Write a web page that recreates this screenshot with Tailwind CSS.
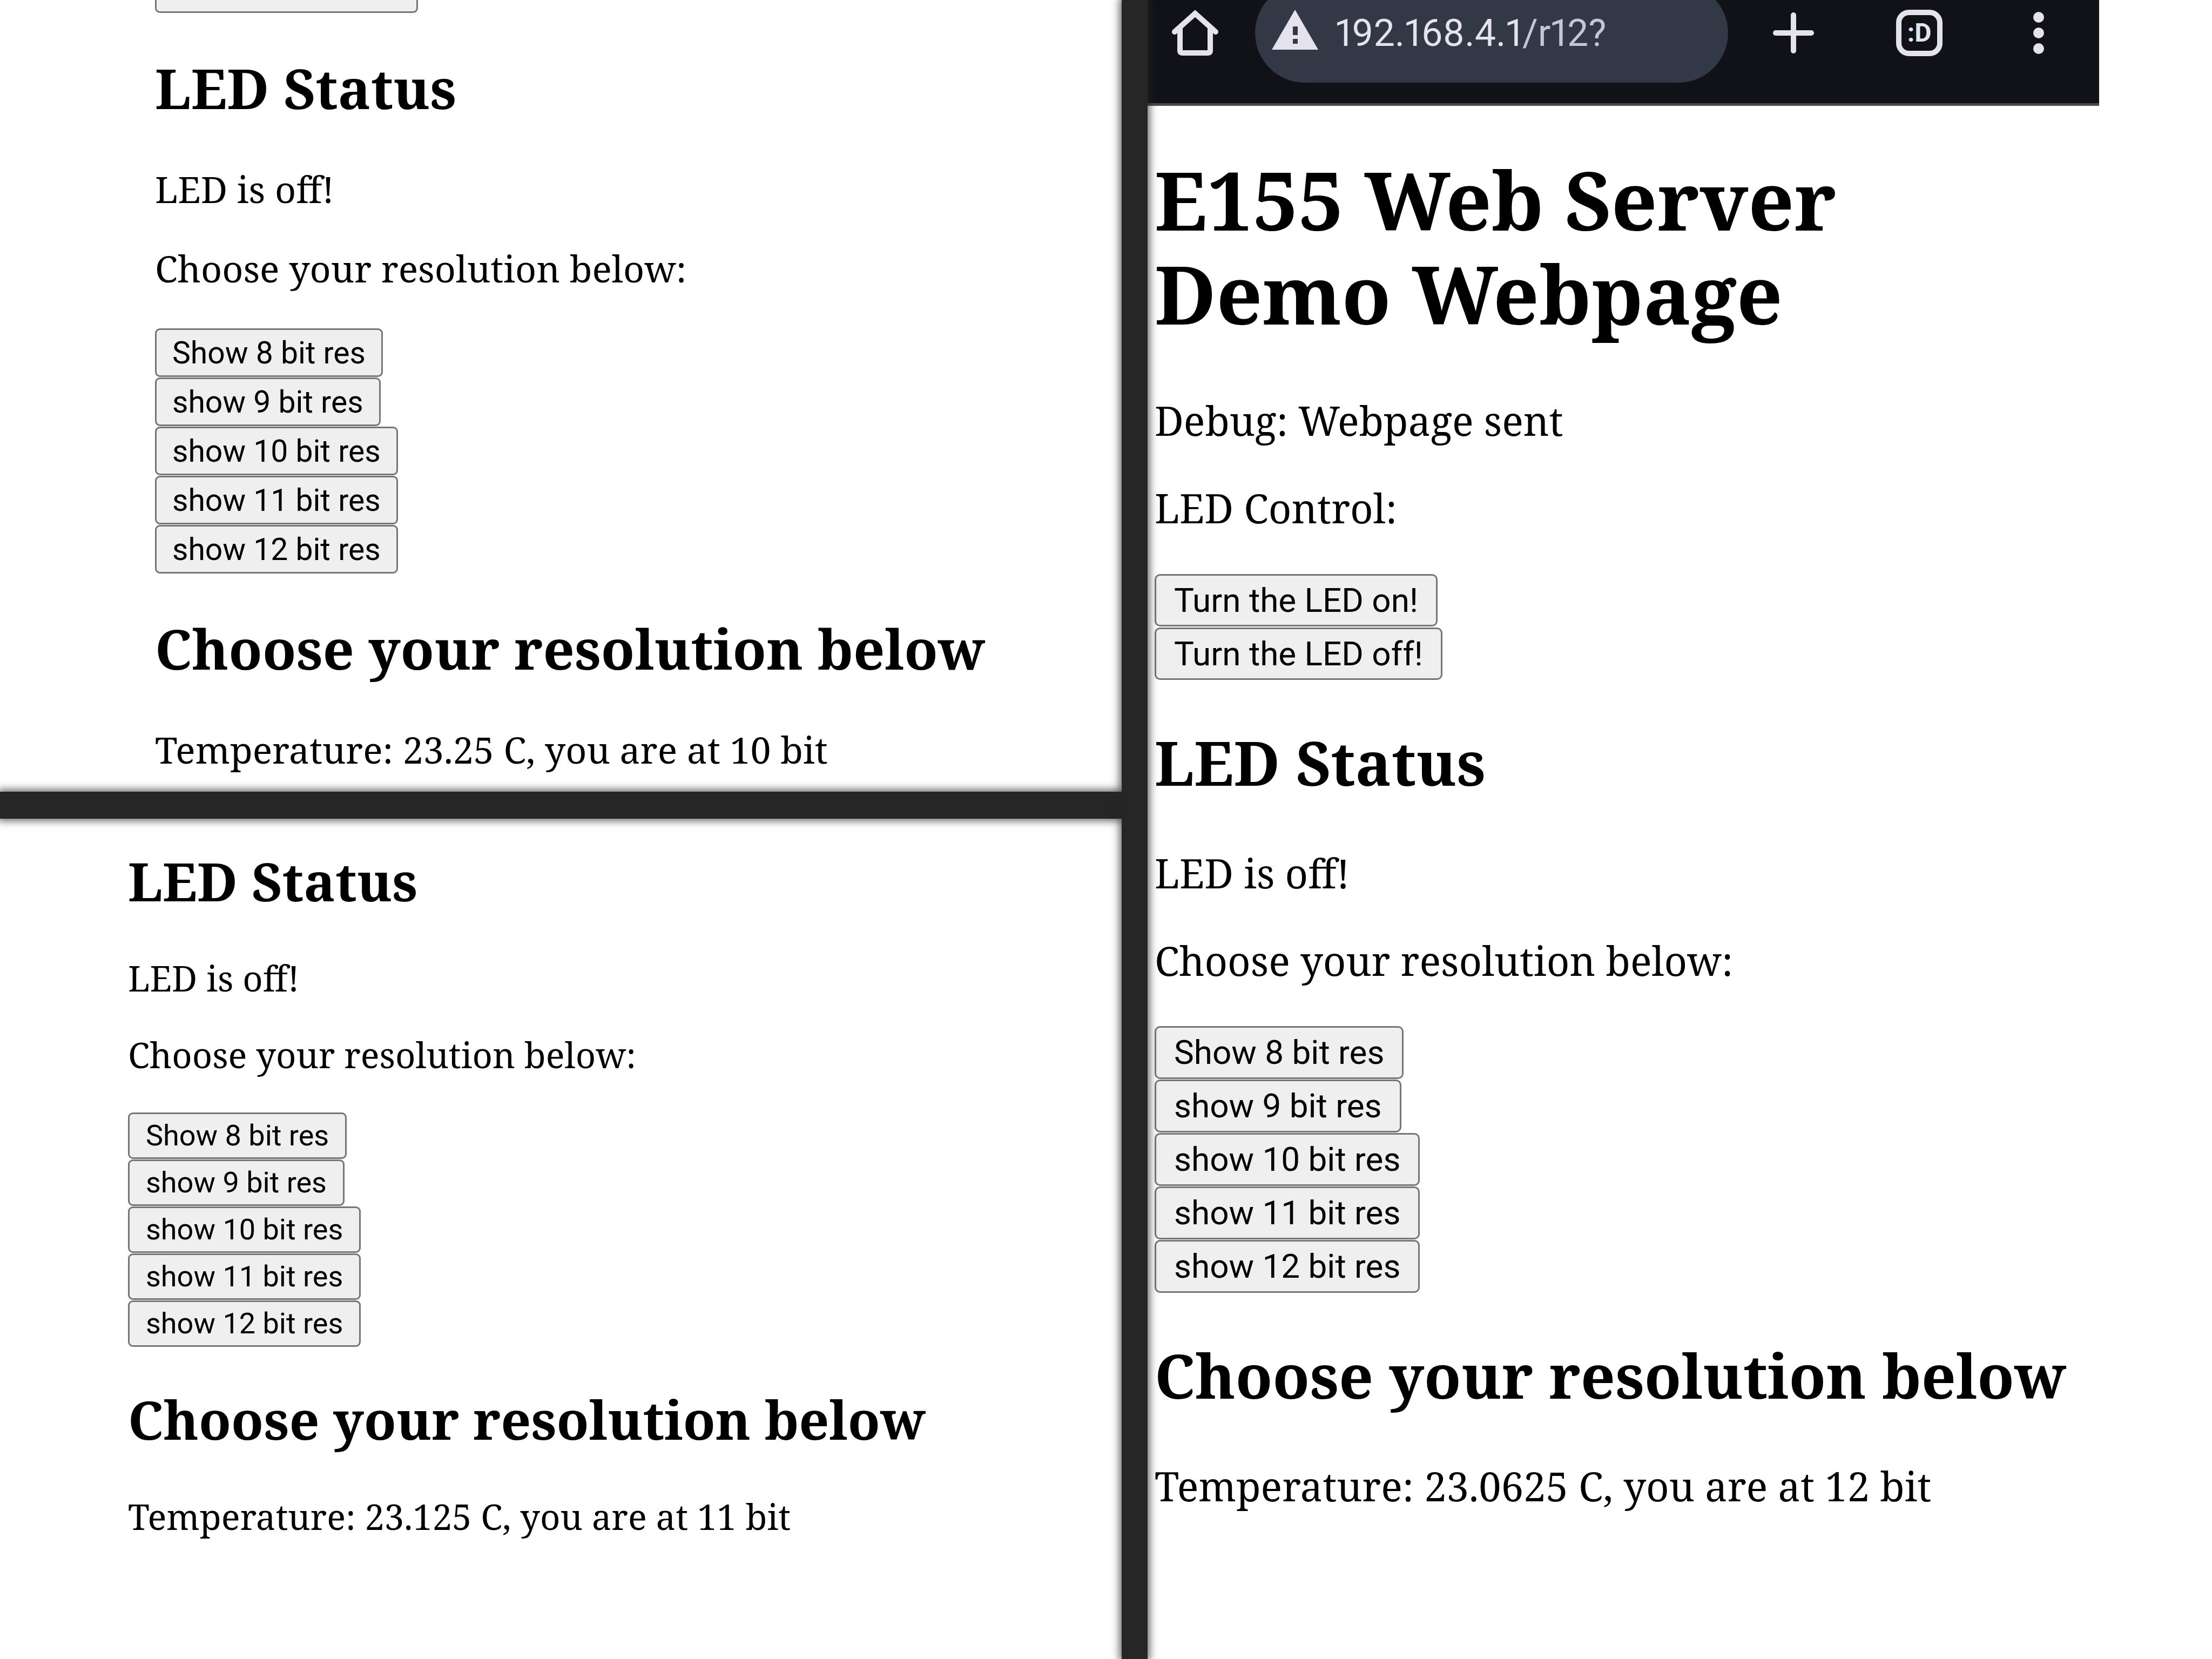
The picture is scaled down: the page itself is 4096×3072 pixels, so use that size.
<!DOCTYPE html>
<html lang="en">
<head>
<meta charset="utf-8">
<meta name="viewport" content="width=device-width, initial-scale=1">
<title>E155 Web Server Demo Webpage</title>
<script src="https://cdn.jsdelivr.net/npm/@tailwindcss/browser@4"></script>
</head>
<body class="bg-white text-black font-['Noto_Serif','DejaVu_Serif_Condensed',serif]">
<div class="grid min-h-screen grid-cols-[2077fr_48px_1971fr] overflow-hidden">

  <div class="flex min-w-0 flex-col">
    <!-- 10 bit reading -->
    <section class="pl-[287px] pb-[38px]">
      <!-- lower edge of the button that is scrolled out of view -->
      <button class="block h-[24px] w-[487px] rounded-b-[9px] border-3 border-t-0 border-[#767676] bg-[#efefef]" aria-label="Turn the LED off!"></button>
      <h2 class="mt-[79px] text-[102px] leading-[120px] font-bold">LED Status</h2>
      <p class="mt-[87px] text-[68px] leading-[80px]">LED is off!</p>
      <p class="mt-[67px] text-[68px] leading-[80px]">Choose your resolution below:</p>
      <div class="mt-[71px] flex flex-col items-start gap-px font-[Roboto,sans-serif] text-[57px] leading-none">
        <button class="h-[90px] rounded-[9px] border-3 border-[#767676] bg-[#efefef] px-[29px]">Show 8 bit res</button>
        <button class="h-[90px] rounded-[9px] border-3 border-[#767676] bg-[#efefef] px-[29px]">show 9 bit res</button>
        <button class="h-[90px] rounded-[9px] border-3 border-[#767676] bg-[#efefef] px-[29px]">show 10 bit res</button>
        <button class="h-[90px] rounded-[9px] border-3 border-[#767676] bg-[#efefef] px-[29px]">show 11 bit res</button>
        <button class="h-[90px] rounded-[9px] border-3 border-[#767676] bg-[#efefef] px-[29px]">show 12 bit res</button>
      </div>
      <h2 class="mt-[79px] text-[102px] leading-[120px] font-bold">Choose your resolution below</h2>
      <p class="mt-[87px] text-[68px] leading-[80px]">Temperature: 23.25 C, you are at 10 bit</p>
    </section>

    <div class="h-[50px] shrink-0 bg-[#262626] shadow-[0_0_14px_4px_#262626b3]"></div>

    <!-- 11 bit reading -->
    <section class="pl-[237px] pt-[58px]">
      <h2 class="text-[98px] leading-[115px] font-bold">LED Status</h2>
      <p class="mt-[84px] text-[65px] leading-[77px]">LED is off!</p>
      <p class="mt-[65px] text-[65px] leading-[77px]">Choose your resolution below:</p>
      <div class="mt-[68px] flex flex-col items-start gap-px font-[Roboto,sans-serif] text-[54px] leading-none">
        <button class="h-[86px] rounded-[9px] border-3 border-[#767676] bg-[#efefef] px-[30px]">Show 8 bit res</button>
        <button class="h-[86px] rounded-[9px] border-3 border-[#767676] bg-[#efefef] px-[30px]">show 9 bit res</button>
        <button class="h-[86px] rounded-[9px] border-3 border-[#767676] bg-[#efefef] px-[30px]">show 10 bit res</button>
        <button class="h-[86px] rounded-[9px] border-3 border-[#767676] bg-[#efefef] px-[30px]">show 11 bit res</button>
        <button class="h-[86px] rounded-[9px] border-3 border-[#767676] bg-[#efefef] px-[30px]">show 12 bit res</button>
      </div>
      <h2 class="mt-[77px] text-[98px] leading-[115px] font-bold">Choose your resolution below</h2>
      <p class="mt-[84px] text-[65px] leading-[77px]">Temperature: 23.125 C, you are at 11 bit</p>
    </section>
  </div>

  <div class="z-10 bg-[#262626] shadow-[0_0_14px_4px_#262626b3]"></div>

  <!-- 12 bit reading, with the browser bar -->
  <div class="min-w-0">
    <header class="mr-[209px] h-[196px] overflow-hidden border-b-5 border-[#49494d] bg-[#111217] text-[#e4e2ea]">
      <nav class="-mt-[31px] flex h-[184px] items-center pr-[102px] pl-[45px]">
        <button aria-label="Home" class="shrink-0">
          <svg class="size-[86px]" viewBox="0 0 86 86" fill="none" stroke="currentColor" stroke-width="10" stroke-linecap="round" stroke-linejoin="round"><path d="M5 41 43 7l38 34" stroke-linejoin="miter"/><path d="M15 34v42q0 4 4 4h48q4 0 4-4V34"/></svg>
        </button>
        <div class="ml-[68px] flex h-full min-w-0 flex-1 items-center rounded-full bg-[#333846] pr-[60px] pl-[31px]">
          <button aria-label="Connection is not secure" class="shrink-0">
            <svg class="h-[86px] w-[86px]" viewBox="0 0 86 86" fill="currentColor"><path fill-rule="evenodd" d="M43 0 86 74H0ZM39 31v16h9V31ZM39 54v9h9v-9Z"/></svg>
          </button>
          <input aria-label="Address" type="text" value="192.168.4.1/r12?" class="ml-[32px] h-[100px] min-w-0 flex-1 bg-[linear-gradient(90deg,#e4e3ec_342px,#c3c5d8_342px)] bg-clip-text font-[Roboto,sans-serif] text-[70px] text-transparent proportional-nums outline-none">
        </div>
        <button aria-label="New tab" class="ml-[83px] shrink-0">
          <svg class="size-[76px]" viewBox="0 0 76 76" fill="none" stroke="currentColor" stroke-width="10" stroke-linecap="round"><path d="M38 5v66M5 38h66"/></svg>
        </button>
        <button aria-label="Switch tabs" class="ml-[152px] flex size-[86px] shrink-0 items-center justify-center rounded-[24px] border-10 border-current font-[Roboto,sans-serif] text-[48px] leading-none font-bold">:D</button>
        <button aria-label="More options" class="ml-[168px] shrink-0">
          <svg class="h-[78px] w-[20px]" viewBox="0 0 20 78" fill="currentColor"><circle cx="10" cy="10" r="10"/><circle cx="10" cy="39" r="10"/><circle cx="10" cy="68" r="10"/></svg>
        </button>
      </nav>
    </header>
    <main class="pt-[87px] pl-[13px]">
      <h1 class="text-[149px] leading-[174px] font-bold">E155 Web Server<br>Demo Webpage</h1>
      <p class="mt-[104px] text-[74px] leading-[88px]">Debug: Webpage sent</p>
      <p class="mt-[74px] text-[74px] leading-[88px]">LED Control:</p>
      <div class="mt-[78px] flex flex-col items-start gap-[2px] font-[Roboto,sans-serif] text-[62px] leading-none">
        <button class="h-[97px] rounded-[10px] border-3 border-[#767676] bg-[#efefef] px-[33px]">Turn the LED on!</button>
        <button class="h-[97px] rounded-[10px] border-3 border-[#767676] bg-[#efefef] px-[33px]">Turn the LED off!</button>
      </div>
      <h2 class="mt-[87px] text-[112px] leading-[132px] font-bold">LED Status</h2>
      <p class="mt-[95px] text-[74px] leading-[88px]">LED is off!</p>
      <p class="mt-[74px] text-[74px] leading-[88px]">Choose your resolution below:</p>
      <div class="mt-[77px] flex flex-col items-start gap-px font-[Roboto,sans-serif] text-[62px] leading-none">
        <button class="h-[98px] rounded-[10px] border-3 border-[#767676] bg-[#efefef] px-[33px]">Show 8 bit res</button>
        <button class="h-[98px] rounded-[10px] border-3 border-[#767676] bg-[#efefef] px-[33px]">show 9 bit res</button>
        <button class="h-[98px] rounded-[10px] border-3 border-[#767676] bg-[#efefef] px-[33px]">show 10 bit res</button>
        <button class="h-[98px] rounded-[10px] border-3 border-[#767676] bg-[#efefef] px-[33px]">show 11 bit res</button>
        <button class="h-[98px] rounded-[10px] border-3 border-[#767676] bg-[#efefef] px-[33px]">show 12 bit res</button>
      </div>
      <h2 class="mt-[87px] text-[112px] leading-[132px] font-bold">Choose your resolution below</h2>
      <p class="mt-[95px] text-[74px] leading-[88px]">Temperature: 23.0625 C, you are at 12 bit</p>
    </main>
  </div>
</div>
</body>
</html>
